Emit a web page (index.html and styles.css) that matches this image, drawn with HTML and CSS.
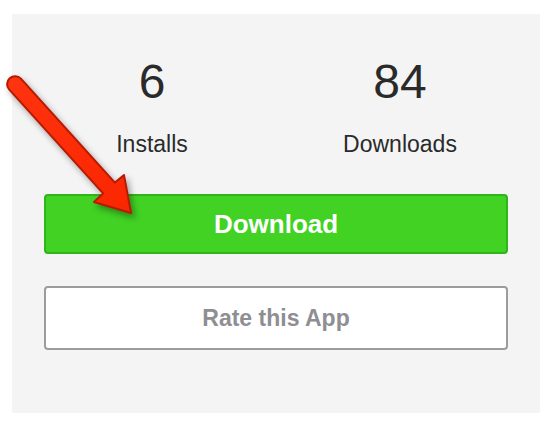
FILE: index.html
```html
<!DOCTYPE html>
<html>
<head>
<meta charset="utf-8">
<link rel="stylesheet" href="styles.css">
</head>
<body>
<div class="panel">
  <div class="stats">
    <div class="stat">
      <div class="num">6</div>
      <div class="label">Installs</div>
    </div>
    <div class="stat">
      <div class="num">84</div>
      <div class="label">Downloads</div>
    </div>
  </div>
  <div class="btn btn-download">Download</div>
  <div class="btn btn-rate">Rate this App</div>
</div>
<svg class="arrow" width="554" height="426" viewBox="0 0 554 426">
  <defs>
    <linearGradient id="ag" x1="0" y1="0" x2="1" y2="1">
      <stop offset="0" stop-color="#ff3410"/>
      <stop offset="1" stop-color="#fa2600"/>
    </linearGradient>
  </defs>
  <path d="M20.9,78.6 L114.9,182.6 L124,175 L131,213 L94,202 L103.1,193.4 L9.1,89.4 A8,8 0 0,1 20.9,78.6 Z" fill="url(#ag)" stroke="#b81a00" stroke-width="2" stroke-linejoin="round"/>
</svg>
</body>
</html>
```
FILE: styles.css
```css
html, body {
  margin: 0;
  padding: 0;
  background: #ffffff;
  width: 554px;
  height: 426px;
  overflow: hidden;
}
body {
  font-family: "Liberation Sans", Arial, sans-serif;
  position: relative;
}
.panel {
  margin: 14px 14px 0 12px;
  height: 399px;
  box-sizing: border-box;
  background: #f4f4f4;
  padding: 40px 32px 0;
}
.stats {
  display: grid;
  grid-template-columns: 1fr 1fr;
  margin: 0 -16px;
  text-align: center;
  color: #2a2a2a;
}
.num {
  font-size: 48px;
  line-height: 56px;
}
.label {
  font-size: 23px;
  line-height: 28px;
  margin-top: 20px;
}
.btn {
  box-sizing: border-box;
  display: flex;
  align-items: center;
  justify-content: center;
  font-weight: bold;
  border-radius: 4px;
}
.btn-download {
  margin-top: 36px;
  height: 60px;
  background: #41d224;
  border: 2px solid #31b41b;
  color: #ffffff;
  font-size: 26px;
}
.btn-rate {
  margin-top: 32px;
  height: 64px;
  background: #ffffff;
  border: 2px solid #9b9ba0;
  color: #8e8e93;
  font-size: 23px;
}
.arrow {
  position: absolute;
  left: 0;
  top: 0;
  pointer-events: none;
  filter: drop-shadow(3px 4px 3px rgba(0, 0, 0, 0.35));
}
```
